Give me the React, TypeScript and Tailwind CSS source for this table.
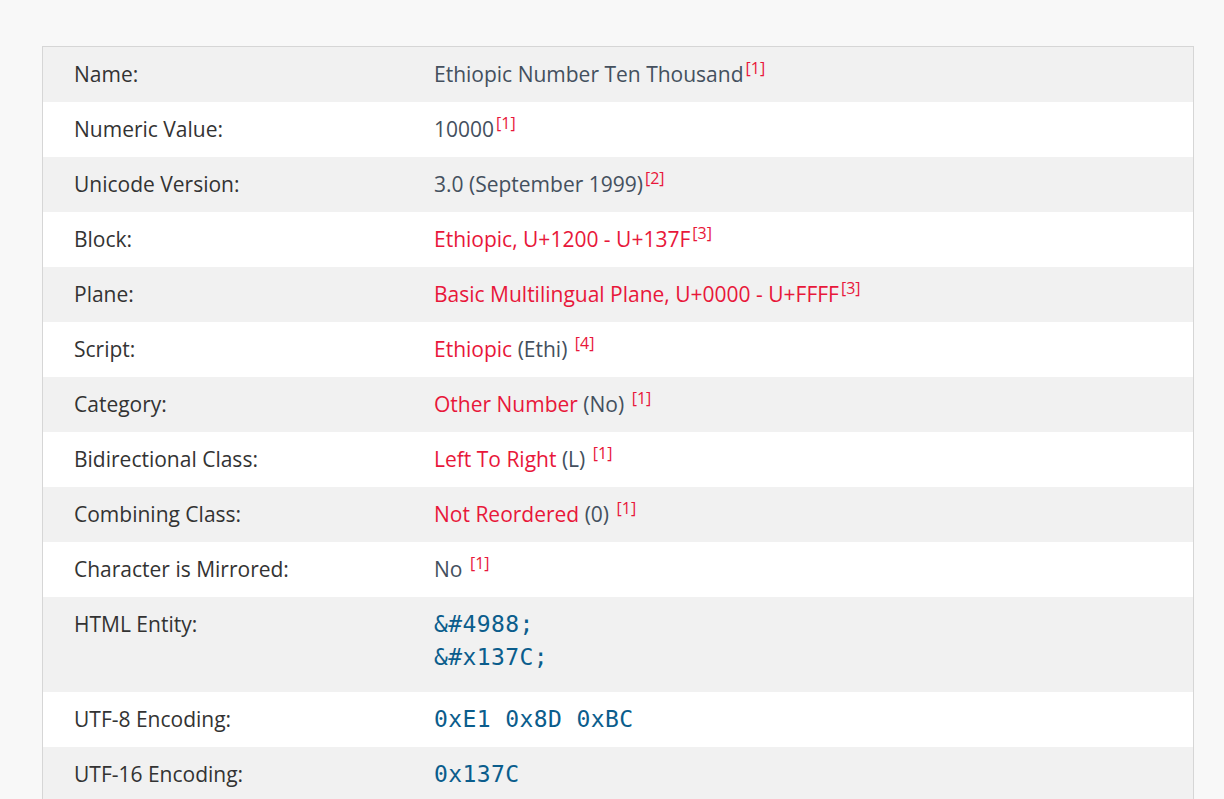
import React from 'react';

type Part = { text: string; red?: boolean };
type Row = { label: string; parts?: Part[]; mono?: string[]; refNum?: string; refGap?: boolean };

const rows: Row[] = [
  { label: 'Name:', parts: [{ text: 'Ethiopic Number Ten Thousand' }], refNum: '1' },
  { label: 'Numeric Value:', parts: [{ text: '10000' }], refNum: '1' },
  { label: 'Unicode Version:', parts: [{ text: '3.0 (September 1999)' }], refNum: '2' },
  { label: 'Block:', parts: [{ text: 'Ethiopic, U+1200 - U+137F', red: true }], refNum: '3' },
  { label: 'Plane:', parts: [{ text: 'Basic Multilingual Plane, U+0000 - U+FFFF', red: true }], refNum: '3' },
  { label: 'Script:', parts: [{ text: 'Ethiopic', red: true }, { text: ' (Ethi)' }], refNum: '4', refGap: true },
  { label: 'Category:', parts: [{ text: 'Other Number', red: true }, { text: ' (No)' }], refNum: '1', refGap: true },
  { label: 'Bidirectional Class:', parts: [{ text: 'Left To Right', red: true }, { text: ' (L)' }], refNum: '1', refGap: true },
  { label: 'Combining Class:', parts: [{ text: 'Not Reordered', red: true }, { text: ' (0)' }], refNum: '1', refGap: true },
  { label: 'Character is Mirrored:', parts: [{ text: 'No' }], refNum: '1', refGap: true },
  { label: 'HTML Entity:', mono: ['&#4988;', '&#x137C;'] },
  { label: 'UTF-8 Encoding:', mono: ['0xE1 0x8D 0xBC'] },
  { label: 'UTF-16 Encoding:', mono: ['0x137C'] },
];

export default function App() {
  return (
    <div className="min-h-[799px] bg-[#f8f8f8] pl-[42px] pr-[30px] pt-[46px] font-['Open_Sans',sans-serif]">
      <div className="border border-b-0 border-[#d6d6d6]">
        {rows.map((row, i) => (
          <div
            key={row.label}
            className={`grid grid-cols-[360px_1fr] py-[14px] pl-[31px] ${i % 2 === 0 ? 'bg-[#f1f1f1]' : 'bg-white'}`}
          >
            <div className="text-[21px] leading-[27px] text-[#333333]">{row.label}</div>
            {row.mono ? (
              <div
                className={`space-y-[6px] font-['DejaVu_Sans_Mono',monospace] text-[23px] leading-[27px] tracking-[0.4px] text-[#0b5d8c] ${row.mono.length > 1 ? 'pb-[7px]' : ''}`}
              >
                {row.mono.map((m) => (
                  <div key={m}>{m}</div>
                ))}
              </div>
            ) : (
              <div className="h-[27px] text-[21px] leading-[27px] text-[#44505e]">
                {row.parts!.map((p, j) => (
                  <span key={j} className={p.red ? 'text-[#e8173a]' : ''}>
                    {p.text}
                  </span>
                ))}
                {row.refGap && ' '}
                <sup className="relative top-[-8px] ml-[2px] text-[16px] text-[#e8173a]">[{row.refNum}]</sup>
              </div>
            )}
          </div>
        ))}
      </div>
    </div>
  );
}
